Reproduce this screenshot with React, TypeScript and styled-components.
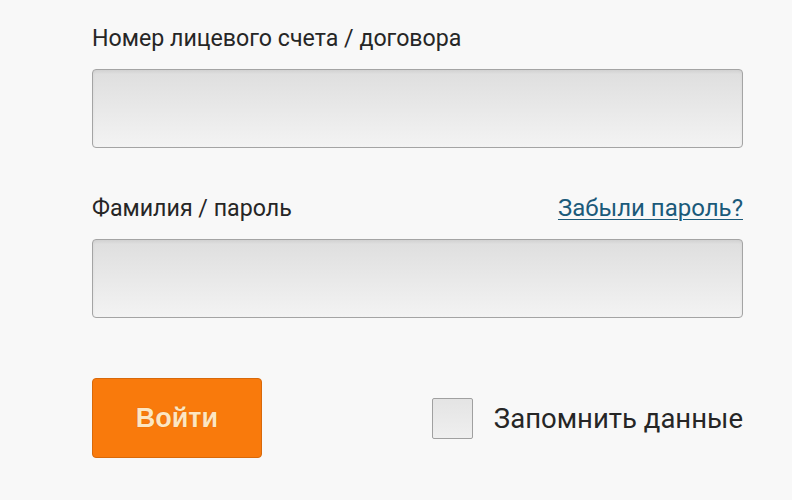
import React, { useState } from "react";
import styled, { createGlobalStyle } from "styled-components";

const GlobalStyle = createGlobalStyle`
  body {
    margin: 0;
    background: #f8f8f8;
    font-family: Roboto, "Liberation Sans", Arial, sans-serif;
  }
`;

const Form = styled.form`
  width: 651px;
  padding: 23px 0 0 92px;
  display: flex;
  flex-direction: column;
`;

const Field = styled.div`
  display: flex;
  flex-direction: column;
  margin-bottom: 45px;
`;

const LabelRow = styled.div`
  display: flex;
  justify-content: space-between;
  align-items: baseline;
  height: 31px;
  margin-bottom: 15px;
`;

const Label = styled.label`
  font-size: 23.2px;
  color: #262626;
  line-height: 31px;
`;

const Link = styled.a`
  font-size: 24px;
  line-height: 31px;
  color: #1b5a7a;
  text-decoration: underline;
  text-underline-offset: 3px;
  text-decoration-thickness: 1px;
`;

const Input = styled.input`
  box-sizing: border-box;
  width: 651px;
  height: 79px;
  border: 1px solid #a4a4a4;
  border-radius: 4px;
  background: linear-gradient(#dedede, #f3f3f3);
  box-shadow: inset 0 2px 3px rgba(0, 0, 0, 0.06);
  font-size: 22px;
  padding: 0 16px;
  outline: none;
`;

const Footer = styled.div`
  display: flex;
  align-items: center;
  justify-content: space-between;
  margin-top: 15px;
`;

const Submit = styled.button`
  width: 170px;
  height: 80px;
  border: 1px solid #d8690a;
  border-radius: 4px;
  background: #f97a0c;
  color: #fde6c2;
  font-family: "Liberation Sans", Arial, sans-serif;
  font-weight: bold;
  font-size: 27px;
  text-shadow: 0 0 1px rgba(120, 60, 0, 0.4);
  cursor: pointer;
`;

const Remember = styled.label`
  display: flex;
  align-items: center;
  gap: 21px;
  font-size: 27.5px;
  color: #262626;
  cursor: pointer;
`;

const Box = styled.span<{ checked: boolean }>`
  box-sizing: border-box;
  width: 41px;
  height: 41px;
  border: 1px solid #a0a0a0;
  border-radius: 2px;
  background: linear-gradient(#e4e4e4, #efefef);
  display: flex;
  align-items: center;
  justify-content: center;
  color: #444;
  font-size: 26px;
`;

export default function App() {
  const [remember, setRemember] = useState(false);

  return (
    <>
      <GlobalStyle />
      <Form onSubmit={(e) => e.preventDefault()}>
        <Field>
          <LabelRow>
            <Label>Номер лицевого счета / договора</Label>
          </LabelRow>
          <Input type="text" />
        </Field>
        <Field>
          <LabelRow>
            <Label>Фамилия / пароль</Label>
            <Link href="#">Забыли пароль?</Link>
          </LabelRow>
          <Input type="password" />
        </Field>
        <Footer>
          <Submit type="submit">Войти</Submit>
          <Remember onClick={() => setRemember(!remember)}>
            <Box checked={remember}>{remember ? "✓" : ""}</Box>
            Запомнить данные
          </Remember>
        </Footer>
      </Form>
    </>
  );
}
